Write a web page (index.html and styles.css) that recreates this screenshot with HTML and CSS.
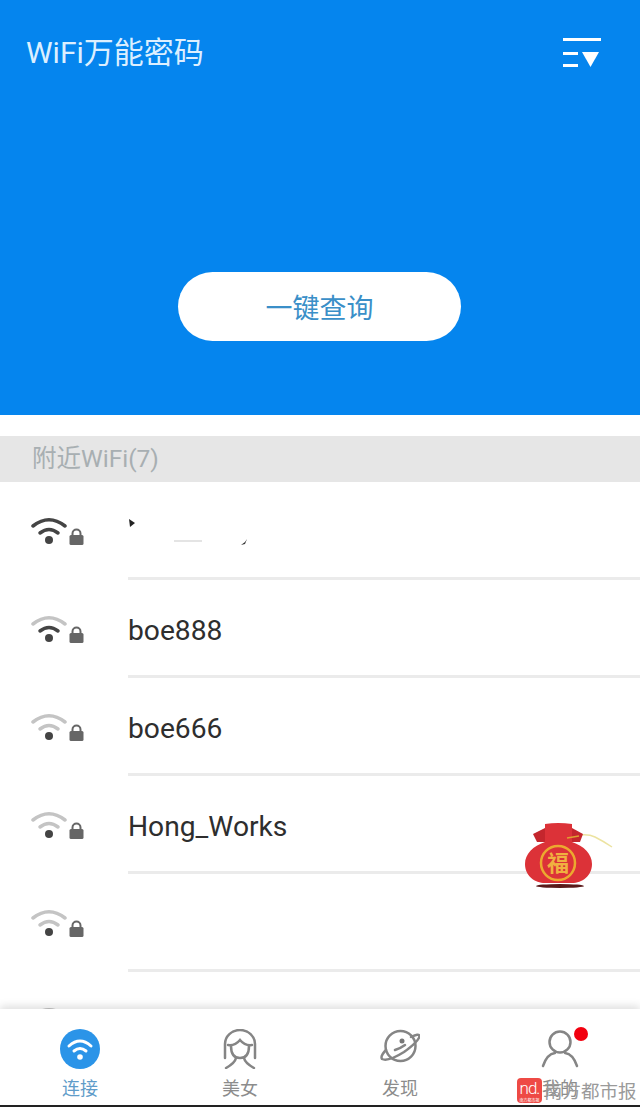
FILE: index.html
```html
<!DOCTYPE html>
<html lang="zh-CN">
<head>
    <meta charset="UTF-8">
    <title>WiFi万能密码</title>

    <link rel="stylesheet" href="styles.css">
</head>
<body>
<div class="page">
    <header class="hero">
        <div class="topbar">
            <h1 class="title">WiFi万能密码</h1>
            <svg class="menu-icon" width="38" height="30" viewBox="0 0 38 30">
                <rect x="0" y="0" width="38" height="3" fill="#fff"/>
                <rect x="0" y="14" width="15" height="3" fill="#fff"/>
                <rect x="0" y="26" width="15" height="3" fill="#fff"/>
                <path d="M19 14H36L27.500 29Z" fill="#fff"/>
            </svg>
        </div>
        <button class="query-btn">一键查询</button>
    </header>

    <div class="nearby">附近WiFi(7)</div>

    <ul class="wifi-list">
        <li class="wifi-row">
            <div class="wifi-icon">
                <svg width="54" height="30" viewBox="0 0 54 30">
                    <path class="arc" d="M2 10Q18 -2.500 34 10"/>
                    <path class="arc" d="M9 17Q18 10 27 17"/>
                    <circle cx="18" cy="24" r="4" fill="#444"/>
                    <path class="shackle" d="M41.500 19V17.500A4 4 0 0 1 49.500 17.500V19"/>
                    <rect x="38.500" y="19" width="14" height="10" rx="1.500" fill="#666"/>
                </svg>
            </div>
            <div class="wifi-name">
                <svg class="smudge" width="125" height="36" viewBox="0 0 125 36">
                    <path d="M1 5L7 9L2 13Z" fill="#222"/>
                    <rect x="46" y="26" width="28" height="2" fill="#e4e4e4"/>
                    <path d="M119 25L117 30L113 31L117 28Z" fill="#333"/>
                </svg>
            </div>
        </li>
        <li class="wifi-row">
            <div class="wifi-icon">
                <svg width="54" height="30" viewBox="0 0 54 30">
                    <path class="arc arc-off" d="M2 10Q18 -2.500 34 10"/>
                    <path class="arc" d="M9 17Q18 10 27 17"/>
                    <circle cx="18" cy="24" r="4" fill="#444"/>
                    <path class="shackle" d="M41.500 19V17.500A4 4 0 0 1 49.500 17.500V19"/>
                    <rect x="38.500" y="19" width="14" height="10" rx="1.500" fill="#666"/>
                </svg>
            </div>
            <div class="wifi-name">boe888</div>
        </li>
        <li class="wifi-row">
            <div class="wifi-icon">
                <svg width="54" height="30" viewBox="0 0 54 30">
                    <path class="arc arc-off" d="M2 10Q18 -2.500 34 10"/>
                    <path class="arc arc-off" d="M9 17Q18 10 27 17"/>
                    <circle cx="18" cy="24" r="4" fill="#444"/>
                    <path class="shackle" d="M41.500 19V17.500A4 4 0 0 1 49.500 17.500V19"/>
                    <rect x="38.500" y="19" width="14" height="10" rx="1.500" fill="#666"/>
                </svg>
            </div>
            <div class="wifi-name">boe666</div>
        </li>
        <li class="wifi-row">
            <div class="wifi-icon">
                <svg width="54" height="30" viewBox="0 0 54 30">
                    <path class="arc arc-off" d="M2 10Q18 -2.500 34 10"/>
                    <path class="arc arc-off" d="M9 17Q18 10 27 17"/>
                    <circle cx="18" cy="24" r="4" fill="#444"/>
                    <path class="shackle" d="M41.500 19V17.500A4 4 0 0 1 49.500 17.500V19"/>
                    <rect x="38.500" y="19" width="14" height="10" rx="1.500" fill="#666"/>
                </svg>
            </div>
            <div class="wifi-name">Hong_Works</div>
        </li>
        <li class="wifi-row">
            <div class="wifi-icon">
                <svg width="54" height="30" viewBox="0 0 54 30">
                    <path class="arc arc-off" d="M2 10Q18 -2.500 34 10"/>
                    <path class="arc arc-off" d="M9 17Q18 10 27 17"/>
                    <circle cx="18" cy="24" r="4" fill="#444"/>
                    <path class="shackle" d="M41.500 19V17.500A4 4 0 0 1 49.500 17.500V19"/>
                    <rect x="38.500" y="19" width="14" height="10" rx="1.500" fill="#666"/>
                </svg>
            </div>
            <div class="wifi-name"></div>
        </li>
        <li class="wifi-row">
            <div class="wifi-icon">
                <svg width="54" height="30" viewBox="0 0 54 30">
                    <path class="arc arc-off" d="M2 10Q18 -2.500 34 10"/>
                </svg>
            </div>
            <div class="wifi-name"></div>
        </li>
    </ul>

    <svg class="lucky-bag" width="88" height="68" viewBox="0 0 88 68">
        <path d="M42 16Q60 10 70 15Q78 19 87 25" fill="none" stroke="#ece3a0" stroke-width="1.500"/>
        <ellipse cx="35" cy="64" rx="24" ry="2" fill="#5a1a1a"/>
        <path d="M20 6L8 12L12 20H55L58 12L47 6Z" fill="#c4262d"/>
        <path d="M20 2Q33 0 47 2V20C59 24 67 32 67 42C67 54 57 61 47 61H20C10 61 0 54 0 42C0 32 8 24 20 20Z" fill="#dc3238"/>
        <path d="M42 16L54 14" fill="none" stroke="#e0a030" stroke-width="1.500"/>
        <circle cx="33" cy="41" r="17" fill="none" stroke="#eca92f" stroke-width="2.500"/>
        <text x="33" y="49" class="bag-text">福</text>
    </svg>

    <nav class="tabbar">
        <div class="tab tab-active">
            <span class="tab-icon">
                <svg width="40" height="40" viewBox="0 0 40 40">
                    <circle cx="20" cy="20" r="20" fill="#2b94e8"/>
                    <path class="tab-wifi" d="M9 17Q20 7 31 17"/>
                    <path class="tab-wifi" d="M14 22Q20 17 26 22"/>
                    <circle cx="20" cy="28" r="2.800" fill="#fff"/>
                </svg>
            </span>
            <span class="tab-label">连接</span>
        </div>
        <div class="tab">
            <span class="tab-icon">
                <svg width="34" height="40" viewBox="0 0 34 40">
                    <path class="line-icon" d="M2 29V15A15 14 0 0 1 32 15V29"/>
                    <path class="line-icon" d="M5 16Q12 17 17 11Q22 17 29 16"/>
                    <path class="line-icon" d="M8 17Q8 29 17 29Q26 29 26 17"/>
                    <path class="line-icon" d="M13 29Q12 34 3 39M21 29Q22 34 31 39"/>
                </svg>
            </span>
            <span class="tab-label">美女</span>
        </div>
        <div class="tab">
            <span class="tab-icon">
                <svg width="40" height="40" viewBox="0 0 40 40">
                    <circle class="line-icon" cx="20.500" cy="17" r="15"/>
                    <path class="line-icon" d="M31 8Q39 4 39.500 7Q39 12 24 23Q8 33 2 30Q0 27 6 21"/>
                    <path class="line-icon" d="M15 21Q21 19 25 16"/>
                    <circle cx="22" cy="12" r="2.500" fill="#777"/>
                </svg>
            </span>
            <span class="tab-label">发现</span>
        </div>
        <div class="tab">
            <span class="tab-icon">
                <svg width="38" height="40" viewBox="0 0 38 40">
                    <circle class="line-icon" cx="19" cy="13" r="10.500"/>
                    <path class="line-icon" d="M2 37Q6 25 14 24M36 37Q32 25 24 24"/>
                </svg>
                <span class="badge"></span>
            </span>
            <span class="tab-label">我的</span>
        </div>
    </nav>

    <div class="watermark">
        <div class="nd-logo">
            <span class="nd-mark">nd.</span>
            <span class="nd-small">南方都市报</span>
        </div>
        <span class="nd-text">南方都市报</span>
    </div>
</div>
</body>
</html>
```

FILE: styles.css
```css
html, body {
    margin: 0;
    padding: 0;
}

body {
    background: white;
    font-family: "Noto Sans CJK SC", Roboto, sans-serif;
}

.page {
    position: relative;
    display: flex;
    flex-direction: column;
    width: 640px;
    height: 1107px;
    overflow: hidden;
    box-sizing: border-box;
    border-bottom: 2px solid #222;
}

/*Header*/

.hero {
    display: flex;
    flex-direction: column;
    align-items: center;
    flex: none;
    height: 415px;
    background-color: #0585ee;
}

.topbar {
    display: flex;
    justify-content: space-between;
    align-items: flex-start;
    align-self: stretch;
    padding: 31px 39px 0 26px;
}

.title {
    margin: 0;
    color: #dcefff;
    font-family: Roboto, "Noto Sans CJK SC", sans-serif;
    font-size: 30px;
    font-weight: 400;
    line-height: 44px;
}

.menu-icon {
    margin-top: 7px;
}

.query-btn {
    width: 283px;
    height: 69px;
    margin-top: 197px;
    margin-right: 1px;
    border: none;
    border-radius: 35px;
    background-color: white;
    color: #3a8fc8;
    font-family: "Noto Sans CJK SC", sans-serif;
    font-size: 27px;
    font-weight: 400;
}

/*List*/

.nearby {
    flex: none;
    height: 46px;
    margin-top: 21px;
    padding-left: 32px;
    background-color: #e6e6e6;
    color: #a8afb2;
    font-family: Roboto, "Noto Sans CJK SC", sans-serif;
    font-size: 24.500px;
    line-height: 46px;
}

.wifi-list {
    flex: 1;
    margin: 0;
    padding: 0;
    overflow: hidden;
    list-style: none;
}

.wifi-row {
    display: flex;
    height: 98px;
}

.wifi-icon {
    display: flex;
    align-items: center;
    flex: none;
    width: 97px;
    padding-left: 31px;
    padding-bottom: 1px;
}

.wifi-name {
    display: flex;
    align-items: center;
    flex: 1;
    padding-top: 5px;
    border-bottom: 3px solid #ebebeb;
    color: #2e2e2e;
    font-family: Roboto, sans-serif;
    font-size: 28.200px;
}

.arc {
    fill: none;
    stroke: #444;
    stroke-width: 3.500;
    stroke-linecap: round;
}

.arc-off {
    stroke: #c4c4c4;
}

.shackle {
    fill: none;
    stroke: #666;
    stroke-width: 2;
}

.lucky-bag {
    position: absolute;
    left: 525px;
    top: 822px;
}

.bag-text {
    fill: #f0b040;
    font-family: "Noto Sans CJK SC", sans-serif;
    font-size: 22px;
    font-weight: 700;
    text-anchor: middle;
}

/*Bottom bar*/

.tabbar {
    position: relative;
    display: flex;
    flex: none;
    height: 96px;
    background-color: white;
    box-shadow: 0 -3px 8px rgba(0, 0, 0, 0.13);
}

.tab {
    display: flex;
    flex-direction: column;
    align-items: center;
    flex: 1;
    padding-top: 20px;
}

.tab-icon {
    position: relative;
    display: flex;
    justify-content: center;
    height: 40px;
}

.tab-label {
    margin-top: 5px;
    color: #8c8c8c;
    font-size: 18px;
    line-height: 26px;
}

.tab-active .tab-label {
    color: #5f9cc9;
}

.tab-wifi {
    fill: none;
    stroke: white;
    stroke-width: 3;
    stroke-linecap: round;
}

.line-icon {
    fill: none;
    stroke: #858585;
    stroke-width: 2.500;
    stroke-linecap: round;
}

.badge {
    position: absolute;
    left: 33px;
    top: -2px;
    width: 14px;
    height: 14px;
    border-radius: 50%;
    background-color: #f2000f;
}

/*Watermark*/

.watermark {
    position: absolute;
    left: 517px;
    bottom: 2px;
    display: flex;
    align-items: center;
    gap: 2px;
}

.nd-logo {
    display: flex;
    flex-direction: column;
    align-items: center;
    width: 25px;
    height: 25px;
    border-radius: 4px;
    background-color: #ee4a45;
    color: white;
}

.nd-mark {
    font-family: Roboto, sans-serif;
    font-size: 17px;
    font-weight: 300;
    letter-spacing: -1px;
    line-height: 20px;
}

.nd-small {
    font-size: 4px;
    line-height: 5px;
    white-space: nowrap;
}

.nd-text {
    color: #9a9a9a;
    font-size: 18.500px;
    line-height: 26px;
    white-space: nowrap;
}
```
